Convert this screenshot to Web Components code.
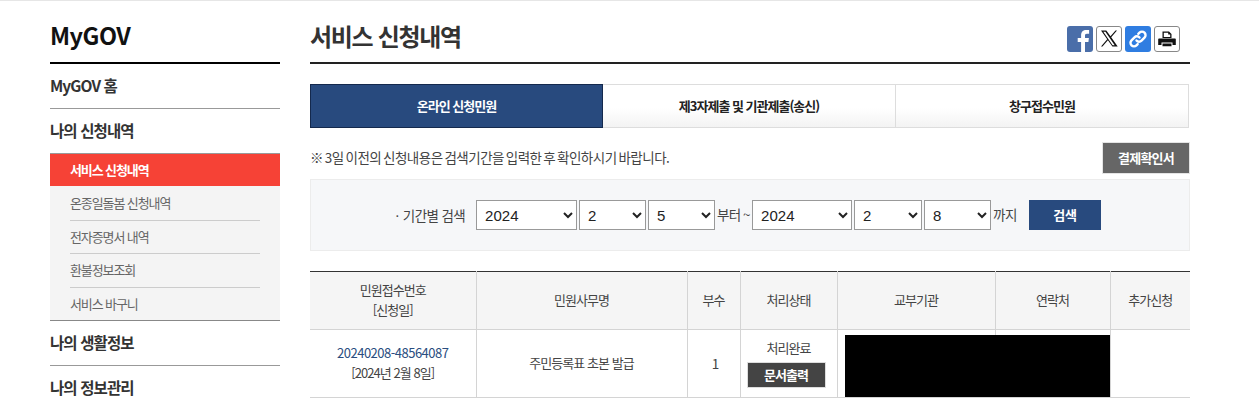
<!DOCTYPE html>
<html lang="ko">
<head>
<meta charset="utf-8">
<title>서비스 신청내역</title>
<style>
  html, body { margin: 0; padding: 0; background: #fff; overflow: hidden; }
  body {
    height: 400px;
    font-family: "Noto Sans CJK KR", "Noto Sans", sans-serif;
    color: #333;
    border-top: 1px solid #e6e6e6;
    box-sizing: border-box;
  }
</style>
</head>
<body>
<gov-page>
  <gov-sidebar slot="side"></gov-sidebar>
  <page-head slot="main" title-text="서비스 신청내역"></page-head>
  <tab-bar slot="main"></tab-bar>
  <notice-row slot="main"></notice-row>
  <date-search slot="main"></date-search>
  <result-table slot="main"></result-table>
</gov-page>

<script>
class GovPage extends HTMLElement {
  constructor() {
    super();
    this.attachShadow({ mode: "open" });
    this.shadowRoot.innerHTML = `
      <style>
        :host { display: flex; width: 1140px; margin-left: 50px; gap: 30px; }
        .side { width: 230px; flex: none; }
        .main { width: 880px; flex: none; }
      </style>
      <div class="side"><slot name="side"></slot></div>
      <div class="main"><slot name="main"></slot></div>
    `;
  }
}

class GovSidebar extends HTMLElement {
  constructor() {
    super();
    this.attachShadow({ mode: "open" });
    const subs = ["온종일돌봄 신청내역", "전자증명서 내역", "환불정보조회", "서비스 바구니"];
    this.shadowRoot.innerHTML = `
      <style>
        :host { display: block; }
        h2 {
          margin: 0; height: 63px; box-sizing: border-box; padding-top: 16px;
          font-size: 23.500px; line-height: 37px; font-weight: 700; color: #111;
          border-bottom: 2px solid #000; letter-spacing: -0.5px;
        }
        .top {
          display: flex; align-items: center; height: 44px; box-sizing: content-box; border-bottom: 1px solid #999;
          font-size: 15.500px; font-weight: 700; color: #333; letter-spacing: -0.9px;
        }
        .top span, .active span, li span { position: relative; top: -1px; }
        .top.last { border-bottom: 0; }
        .active {
          display: flex; align-items: center; height: 32px; padding-left: 20px;
          background: #f64236; color: #fff; font-size: 13px; font-weight: 700; letter-spacing: -1.100px;
        }
        ul { list-style: none; margin: 0; padding: 1px 20px 0; background: #f4f4f4; border-bottom: 1px solid #888; }
        li {
          display: flex; align-items: center; height: 33px; font-size: 13px; color: #666;
          border-bottom: 1px solid #ccc; letter-spacing: -1.100px;
        }
        li:nth-child(2) { height: 32px; }
        li:last-child { border-bottom: 0; height: 32px; }
      </style>
      <h2>MyGOV</h2>
      <div class="top"><span>MyGOV 홈</span></div>
      <div class="top"><span>나의 신청내역</span></div>
      <div class="active"><span>서비스 신청내역</span></div>
      <ul>${subs.map((s) => `<li><span>${s}</span></li>`).join("")}</ul>
      <div class="top"><span>나의 생활정보</span></div>
      <div class="top last"><span>나의 정보관리</span></div>
    `;
  }
}

class PageHead extends HTMLElement {
  constructor() {
    super();
    this.attachShadow({ mode: "open" });
    this.shadowRoot.innerHTML = `
      <style>
        :host {
          display: flex; justify-content: space-between; align-items: flex-start;
          height: 63px; box-sizing: border-box; border-bottom: 2px solid #222;
        }
        h1 { margin: 17px 0 0; font-size: 24px; line-height: 36px; font-weight: 700; color: #333; letter-spacing: -1.300px; }
        .share { display: flex; gap: 3px; margin: 25px 10px 0 0; }
        .ico { width: 26px; height: 26px; box-sizing: border-box; border-radius: 3px; display: block; }
        .line { border: 1px solid #888; background: #fff; }
        svg { display: block; }
      </style>
      <h1></h1>
      <div class="share">
        <span class="ico" style="background:#4a6ea9">
          <svg width="26" height="26" viewBox="0 0 26 26"><path fill="#fff" d="M18 26v-10h3.400l.5-4H18V9.600c0-1.150.3-1.900 2-1.900h2.100V4.100C21.700 4 20.500 3.900 19.200 3.900c-3 0-5.100 1.800-5.100 5.200V12H10.700v4h3.400v10z"/></svg>
        </span>
        <span class="ico line">
          <svg width="24" height="24" viewBox="0 0 24 24"><path fill="#111" fill-rule="evenodd" d="M4 3.500h5.300l4.200 5.800 5-5.800h1.500l-5.800 6.800 6.500 9.200h-5.300l-4.500-6.300-5.400 6.300H4l6.200-7.200zM6.300 4.700l9.300 13.600h2.100L8.400 4.700z"/></svg>
        </span>
        <span class="ico" style="background:#2f7de1">
          <svg width="26" height="26" viewBox="0 0 26 26" fill="none" stroke="#fff" stroke-width="2.400" stroke-linecap="round"><path d="M11.500 14.500a3.400 3.400 0 0 0 5 .2l3-3a3.500 3.500 0 0 0-5-5l-1.200 1.200"/><path d="M14.500 11.500a3.400 3.400 0 0 0-5-.2l-3 3a3.500 3.500 0 0 0 5 5l1.200-1.200"/></svg>
        </span>
        <span class="ico line">
          <svg width="24" height="24" viewBox="0 0 24 24"><path fill="#111" fill-rule="evenodd" d="M7.500 4.500h6.500l2.500 2.500v4h-9zM8.800 5.800v4.200h6.400V7.500h-2V5.800zM4 11.500h16q.8 0 .8.800v5.700h-3.300v-2.500h-11V18H3.200v-5.700q0-.8.800-.8zM7.500 16.500h9v2.800h-9z"/></svg>
        </span>
      </div>
    `;
    this.shadowRoot.querySelector("h1").textContent = this.getAttribute("title-text");
  }
}

class TabBar extends HTMLElement {
  constructor() {
    super();
    this.attachShadow({ mode: "open" });
    this.shadowRoot.innerHTML = `
      <style>
        :host {
          display: grid; grid-template-columns: 293px 293px 293px; width: 879px; height: 44px;
          margin-top: 20px; font-size: 13px; font-weight: 700; letter-spacing: -1px; color: #222;
        }
        div {
          display: flex; align-items: center; justify-content: center; box-sizing: border-box;
          border: 1px solid #ddd; border-left: 0; padding-bottom: 2px;
          background: linear-gradient(#fff 55%, #f3f3f3);
        }
        div.on { background: #284a7e; border: 1px solid #14294d; color: #fff; }
      </style>
      <div class="on">온라인 신청민원</div>
      <div>제3자제출 및 기관제출(송신)</div>
      <div>창구접수민원</div>
    `;
  }
}

class NoticeRow extends HTMLElement {
  constructor() {
    super();
    this.attachShadow({ mode: "open" });
    this.shadowRoot.innerHTML = `
      <style>
        :host {
          display: flex; justify-content: space-between; align-items: center;
          width: 880px; height: 32px; margin-top: 14px; font-size: 13.500px; color: #444;
          letter-spacing: -0.500px; word-spacing: -1.500px;
        }
        span { padding-bottom: 2px; }
        button {
          width: 88px; height: 32px; margin: 0; padding: 0 0 1px; background: #666; border: 1px solid #e4e4e4;
          color: #fff; font: inherit; font-size: 13px; font-weight: 700; letter-spacing: -0.800px;
        }
      </style>
      <span>※ 3일 이전의 신청내용은 검색기간을 입력한 후 확인하시기 바랍니다.</span>
      <button>결제확인서</button>
    `;
  }
}

class DateSearch extends HTMLElement {
  constructor() {
    super();
    this.attachShadow({ mode: "open" });
    const pick = (w, val) =>
      `<select style="width:${w}px"><option>${val}</option></select>`;
    this.shadowRoot.innerHTML = `
      <style>
        :host {
          display: flex; align-items: center; height: 72px; box-sizing: border-box; margin-top: 5px;
          padding-left: 80px; background: #f6f7f9; border: 1px solid #ececec;
          font-size: 13.500px; color: #444; letter-spacing: -0.600px;
        }
        .lb { margin-right: 11px; }
        select {
          flex: none; height: 30px; margin: 0 2px 0 0; padding: 0 4px; box-sizing: border-box; background: #fff;
          border: 1px solid #999; border-radius: 0; color: #222;
          font-family: "Liberation Sans", Arial, sans-serif; font-size: 15px; letter-spacing: 0;
        }
        .t { position: relative; top: -1px; white-space: nowrap; }
        button {
          width: 72px; height: 30px; margin: 0 0 0 12px; padding: 0 0 2px; border: 0; background: #284a7e; color: #fff;
          font: inherit; font-size: 13px; font-weight: 700;
        }
      </style>
      <span class="lb">ㆍ기간별 검색</span>
      ${pick(101, "2024")}${pick(67, "2")}${pick(67, "5")}
      <span class="t" style="width:33px;margin-right:2px;letter-spacing:-0.900px">부터 ~</span>
      ${pick(100, "2024")}${pick(68, "2")}${pick(67, "8")}
      <span class="t" style="width:24px">까지</span>
      <button>검색</button>
    `;
  }
}

class ResultTable extends HTMLElement {
  constructor() {
    super();
    this.attachShadow({ mode: "open" });
    this.shadowRoot.innerHTML = `
      <style>
        :host { display: block; position: relative; margin-top: 20px; font-size: 13px; color: #444; letter-spacing: -0.950px; }
        table { width: 880px; border-collapse: collapse; table-layout: fixed; border-top: 1px solid #333; }
        th, td { padding: 0 0 2px; text-align: center; border: 1px solid #d4d4d4; line-height: 20px; font-weight: 400; }
        tr > :first-child { border-left: 0; }
        tr > :last-child { border-right: 0; }
        thead tr { height: 58px; }
        th { background: #f5f5f5; border-top: 0; }
        tbody tr { height: 68px; }
        a { color: #2a4d80; text-decoration: none; letter-spacing: -0.500px; }
        .n { font-size: 13.500px; padding-left: 3px; }
        .print {
          display: block; width: 79px; height: 26px; margin: 4px 0 0 6px; box-sizing: border-box;
          background: #444; border: 1px solid #ddd; color: #fff; font-weight: 700; line-height: 24px;
        }
        .mask { position: absolute; left: 535px; top: 64px; width: 265px; height: 62px; background: #000; }
      </style>
      <table>
        <colgroup>
          <col style="width:166px"><col style="width:211px"><col style="width:53px"><col style="width:97px">
          <col style="width:158px"><col style="width:115px"><col style="width:80px">
        </colgroup>
        <thead>
          <tr>
            <th>민원접수번호<br>[신청일]</th>
            <th>민원사무명</th>
            <th>부수</th>
            <th>처리상태</th>
            <th>교부기관</th>
            <th>연락처</th>
            <th>추가신청</th>
          </tr>
        </thead>
        <tbody>
          <tr>
            <td><a href="#">20240208-48564087</a><br>[2024년 2월 8일]</td>
            <td>주민등록표 초본 발급</td>
            <td class="n">1</td>
            <td>처리완료<span class="print">문서출력</span></td>
            <td></td>
            <td></td>
            <td></td>
          </tr>
        </tbody>
      </table>
      <div class="mask"></div>
    `;
  }
}

customElements.define("gov-page", GovPage);
customElements.define("gov-sidebar", GovSidebar);
customElements.define("page-head", PageHead);
customElements.define("tab-bar", TabBar);
customElements.define("notice-row", NoticeRow);
customElements.define("date-search", DateSearch);
customElements.define("result-table", ResultTable);
</script>
</body>
</html>
